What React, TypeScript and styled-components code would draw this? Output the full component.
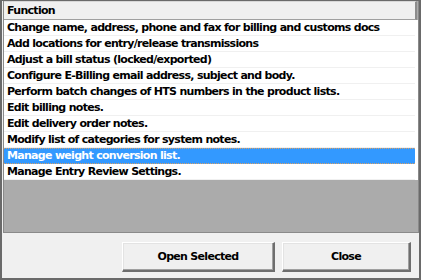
import React from 'react';
import styled, { createGlobalStyle } from 'styled-components';

const GlobalStyle = createGlobalStyle`
  body {
    margin: 0;
    background: #fff;
    font-family: Tahoma, "DejaVu Sans", sans-serif;
  }
`;

const Window = styled.div`
  width: 421px;
  height: 280px;
  box-sizing: border-box;
  border: 2px solid #6a6a6a;
  border-top-width: 1px;
  background: #f0f0f0;
  display: flex;
  flex-direction: column;
`;

const Grid = styled.div`
  height: 232px;
  box-sizing: border-box;
  border: 1px solid #8a8a8a;
  border-top: 0;
  margin: 0 0 0 1px;
  background: #ababab;
  display: flex;
  flex-direction: column;
`;

const Header = styled.div`
  height: 19px;
  box-sizing: border-box;
  background: #f0f0f0;
  border-top: 1px solid #d8d8d8;
  border-bottom: 1px solid #a0a0a0;
  border-right: 2px solid #8c8c8c;
  margin-right: 1px;
  padding-left: 3px;
  font-size: 11px;
  font-weight: bold;
  letter-spacing: -0.7px;
  line-height: 17px;
  color: #000;
`;

const Rows = styled.div`
  background: #fff;
`;

const Row = styled.div<{ $selected?: boolean }>`
  height: 16px;
  box-sizing: border-box;
  background: ${(p) => (p.$selected ? '#3399ff' : '#fff')};
  color: ${(p) => (p.$selected ? '#fff' : '#000')};
  border-bottom: 1px ${(p) => (p.$selected ? 'dotted #d9a066' : 'solid #f0f0f0')};
  border-top: 1px ${(p) => (p.$selected ? 'dotted #d9a066' : 'solid transparent')};
  padding-left: 3px;
  font-size: 11px;
  font-weight: bold;
  letter-spacing: -0.7px;
  line-height: 14px;
  white-space: nowrap;
  margin-right: 3px;
`;

const Footer = styled.div`
  flex: 1;
  display: flex;
  justify-content: flex-end;
  align-items: flex-start;
  gap: 7px;
  padding: 9px 8px 0 0;
`;

const Button = styled.button<{ $w: number }>`
  width: ${(p) => p.$w}px;
  height: 30px;
  box-sizing: border-box;
  background: #f0f0f0;
  border: 1px solid #fff;
  border-right: 2px solid #6e6e6e;
  border-bottom: 2px solid #6e6e6e;
  box-shadow: inset -1px -1px 0 #a0a0a0, inset 1px 1px 0 #e3e3e3;
  font-family: Tahoma, "DejaVu Sans", sans-serif;
  font-size: 11px;
  font-weight: bold;
  letter-spacing: -0.7px;
  color: #000;
  padding: 0;
`;

const items = [
  'Change name, address, phone and fax for billing and customs docs',
  'Add locations for entry/release transmissions',
  'Adjust a bill status (locked/exported)',
  'Configure E-Billing email address, subject and body.',
  'Perform batch changes of HTS numbers in the product lists.',
  'Edit billing notes.',
  'Edit delivery order notes.',
  'Modify list of categories for system notes.',
  'Manage weight conversion list.',
  'Manage Entry Review Settings.',
];

export default function App() {
  return (
    <>
      <GlobalStyle />
      <Window>
        <Grid>
          <Header>Function</Header>
          <Rows>
            {items.map((t, i) => (
              <Row key={t} $selected={i === 8}>
                {t}
              </Row>
            ))}
          </Rows>
        </Grid>
        <Footer>
          <Button $w={153}>Open Selected</Button>
          <Button $w={129}>Close</Button>
        </Footer>
      </Window>
    </>
  );
}
